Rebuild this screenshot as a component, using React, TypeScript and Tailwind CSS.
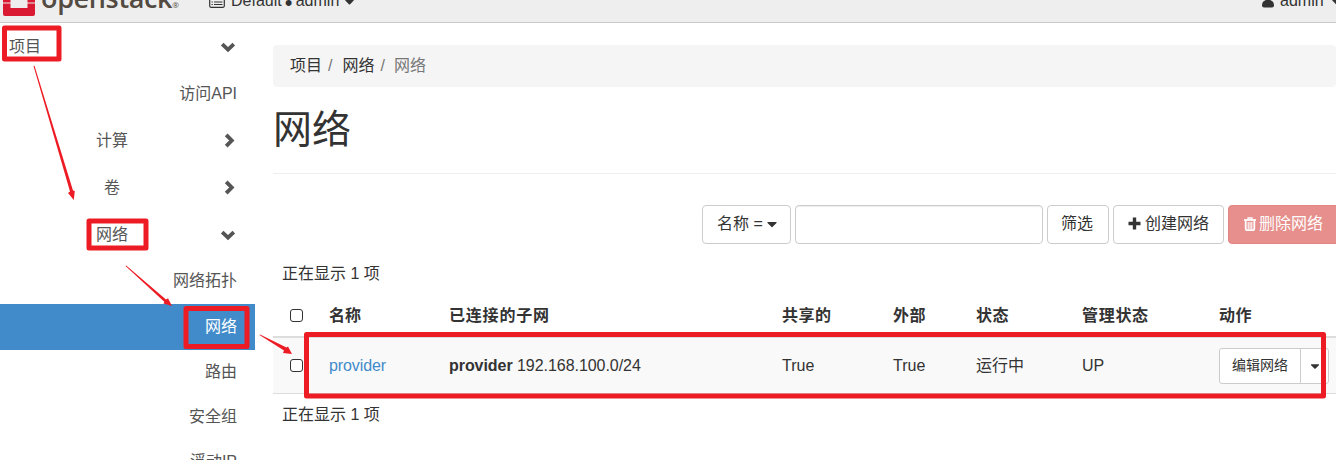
import React from "react";
import { FaCaretDown } from "react-icons/fa";

type NavItem = { label: string; kind: "root" | "group" | "leaf"; open?: boolean; active?: boolean; height: string };

const nav: NavItem[] = [
  { label: "项目", kind: "root", open: true, height: "h-[47px]" },
  { label: "访问API", kind: "leaf", height: "h-[47px]" },
  { label: "计算", kind: "group", height: "h-[47px]" },
  { label: "卷", kind: "group", height: "h-[47px]" },
  { label: "网络", kind: "group", open: true, height: "h-[47px]" },
  { label: "网络拓扑", kind: "leaf", height: "h-[46px]" },
  { label: "网络", kind: "leaf", active: true, height: "h-[46px]" },
  { label: "路由", kind: "leaf", height: "h-[44px]" },
  { label: "安全组", kind: "leaf", height: "h-[45px]" },
  { label: "浮动IP", kind: "leaf", height: "h-[45px]" },
];

function Chevron({ open }: { open?: boolean }) {
  return (
    <svg width="16" height="16" viewBox="0 0 16 16" fill="none" stroke="#555" strokeWidth="3.8" className="shrink-0">
      {open ? <path d="M2.200 5.200 8 10.600l5.800-5.400" /> : <path d="m6.200 1.800 5.600 5.700-5.600 5.700" />}
    </svg>
  );
}

function NavRow({ item }: { item: NavItem }) {
  if (item.kind === "leaf") {
    return (
      <li
        className={`${item.height} flex shrink-0 items-center justify-end pr-[18px] ${
          item.active ? "bg-[#428bca] text-white" : "text-[#555]"
        }`}
      >
        {item.label}
      </li>
    );
  }
  return (
    <li
      className={`${item.height} flex shrink-0 items-center pr-[19px] text-[#555] ${
        item.kind === "root" ? "pl-[9px]" : "pl-[80px]"
      }`}
    >
      <span className={item.kind === "root" ? "" : "w-16 text-center"}>{item.label}</span>
      <span className="ml-auto flex">
        <Chevron open={item.open} />
      </span>
    </li>
  );
}

function Checkbox() {
  return <span className="block size-[13px] rounded-[3px] border border-[#333] bg-white" />;
}

function Plus() {
  return (
    <svg width="13" height="13" viewBox="0 0 13 13" stroke="#333" strokeWidth="3.4" className="mr-1 shrink-0">
      <path d="M6.500 .5v12M.5 6.500h12" />
    </svg>
  );
}

function ListIcon() {
  return (
    <svg width="16" height="14" viewBox="0 0 16 14" fill="none" stroke="#333" className="mr-1.5 shrink-0">
      <rect x=".7" y=".7" width="14.600" height="12.600" rx="1.200" strokeWidth="1.200" />
      <path d="M.7 2.500h14.600" strokeWidth="2" />
      <path d="M2.500 5.500h1.300M5 5.500h8.500M2.500 8h1.300M5 8h8.500M2.500 10.500h1.300M5 10.500h8.500" strokeWidth="1.200" />
    </svg>
  );
}

function UserIcon() {
  return (
    <svg width="12" height="14" viewBox="0 0 12 14" fill="#333" className="mr-1.5 shrink-0">
      <circle cx="6" cy="4" r="3.500" />
      <path d="M3 6.500h6q3 1 3 5 0 2-2 2H2q-2 0-2-2 0-4 3-5Z" />
    </svg>
  );
}

function Trash() {
  return (
    <svg width="12" height="14" viewBox="0 0 12 14" fill="none" stroke="#fff" className="shrink-0">
      <path d="M0 3h12" strokeWidth="1.8" />
      <path d="M4 2.500V1h4v1.500" strokeWidth="1.300" />
      <path d="M1.700 3.500v8.200q0 1.500 1.500 1.500h5.600q1.500 0 1.500-1.500V3.500" strokeWidth="1.800" />
      <path d="M4.200 5v7M6 5v7M7.800 5v7" strokeWidth="1.100" />
    </svg>
  );
}

const columns = "grid grid-cols-[56px_120px_333px_111px_83px_106px_137px_117px] items-center";
const button = "flex h-[39px] shrink-0 items-center rounded border border-[#ccc] bg-white pb-0.5";

function Annotations() {
  return (
    <svg className="pointer-events-none absolute inset-0" width="1336" height="460" viewBox="0 0 1336 460">
      <g fill="none" stroke="#ed1c24" strokeWidth="5" strokeLinejoin="round">
        <rect x="4.500" y="28" width="54.500" height="31" />
        <rect x="89" y="221" width="57" height="27" />
        <rect x="186" y="308.500" width="61" height="38" />
        <rect x="306.500" y="334.500" width="1017" height="61.500" />
      </g>
      <g fill="#ed1c24">
        <path d="M33.500 66 34.500 65.700 73 190.500 74.800 191 73.800 200 68 193 70 191.500Z" />
        <path d="M125.500 266 126.200 265.400 166 299.500 168 298.200 172 306 163.500 303.500 164.300 301.700Z" />
        <path d="M259.500 335 260 334.400 286.500 347.500 288 346.500 292 354 283 353 284 350.500Z" />
      </g>
    </svg>
  );
}

export default function App() {
  return (
    <div className="relative flex h-[460px] w-[1336px] flex-col overflow-hidden bg-white font-['Liberation_Sans','Noto_Sans_CJK_SC',sans-serif] text-base leading-6 text-[#333]">
      <header className="flex h-[23px] shrink-0 items-end overflow-hidden border-b border-[#c8c8c8] bg-[#eee]">
        <svg width="32" height="32" viewBox="0 0 32 32" className="mb-[6px] ml-[3px] shrink-0" fill="#da1a32">
          <path d="M2 0h28q2 0 2 2v7h-8V8H8v1H0V2q0-2 2-2ZM0 10h7.500v8.500H0ZM24.500 10H32v8.500h-7.500ZM0 19.500h7.500V24h17v-4.500H32V30q0 2-2 2H2q-2 0-2-2Z" />
        </svg>
        <span className="mb-[1px] ml-[6px] w-[139px] whitespace-nowrap font-['Open_Sans',sans-serif] text-[27px] leading-8 font-semibold tracking-[-0.35px] text-[#534a42]">
          openstack<span className="text-[8px] font-normal tracking-normal">®</span>
        </span>
        <div className="mb-[9px] ml-[29px] flex h-6 items-center whitespace-nowrap">
          <ListIcon />
          <span>Default</span>
          <span className="h-6 w-[14px] text-center text-[22px] leading-7">•</span>
          <span>admin</span>
          <FaCaretDown size={15} className="ml-[3px]" />
        </div>
        <div className="mb-[9px] ml-auto flex w-[74px] shrink-0 items-center whitespace-nowrap">
          <UserIcon />
          <span>admin</span>
          <FaCaretDown size={15} className="ml-[5px] shrink-0" />
        </div>
      </header>

      <div className="flex min-h-0 flex-1">
        <nav className="w-[255px] shrink-0">
          <ul className="flex flex-col">
            {nav.map((item, i) => (
              <NavRow key={i} item={item} />
            ))}
          </ul>
        </nav>

        <main className="ml-[18px] flex w-[1063px] shrink-0 flex-col pt-[22px]">
          <div className="flex h-[42px] shrink-0 items-center rounded bg-[#f5f5f5] pl-[17px]">
            <span>项目</span>
            <span className="mx-1.5 text-[#777]">/</span>
            <span className="ml-1">网络</span>
            <span className="mx-1.5 text-[#777]">/</span>
            <span className="ml-[3px] text-[#777]">网络</span>
          </div>
          <h1 className="flex h-[87px] shrink-0 items-start border-b border-[#eee] pt-[19px] text-[39px] leading-[48px]">网络</h1>

          <div className="mt-[31px] flex shrink-0 gap-1 pl-[429px]">
            <button className={`${button} w-[89px] pl-[14px]`}>
              名称 =<FaCaretDown size={16} className="ml-px" />
            </button>
            <input className="h-[39px] w-[248px] shrink-0 rounded border border-[#ccc] shadow-[inset_0_1px_1px_rgba(0,0,0,0.075)]" />
            <button className={`${button} w-[62px] pl-[13px]`}>筛选</button>
            <button className={`${button} w-[111px] pl-[14px]`}>
              <Plus />
              创建网络
            </button>
            <button className="flex h-[39px] w-[112px] shrink-0 items-center rounded border border-[#e38582] bg-[#e68f8c] pb-0.5 pl-[15px] text-white">
              <Trash />
              <span className="ml-[3px]">删除网络</span>
            </button>
          </div>

          <p className="mt-[18px] h-6 shrink-0 pl-[9px]">正在显示 1 项</p>

          <div className={`${columns} h-[52px] shrink-0 border-b-2 border-[#ddd] pt-[9px] font-bold`}>
            <span className="pl-[17px]"><Checkbox /></span>
            <span>名称</span>
            <span className="tracking-[0.8px]">已连接的子网</span>
            <span className="tracking-[0.5px]">共享的</span>
            <span className="tracking-[0.5px]">外部</span>
            <span className="tracking-[0.5px]">状态</span>
            <span className="tracking-[0.7px]">管理状态</span>
            <span className="tracking-[0.5px]">动作</span>
          </div>
          <div className={`${columns} h-14 shrink-0 border-b border-[#ddd] bg-[#f9f9f9]`}>
            <span className="pl-[17px]"><Checkbox /></span>
            <a className="tracking-[-0.1px] text-[#428bca]">provider</a>
            <span className="tracking-[-0.05px]"><b>provider</b> 192.168.100.0/24</span>
            <span>True</span>
            <span>True</span>
            <span>运行中</span>
            <span>UP</span>
            <div className="flex h-9 w-[110px] rounded-[3px] border border-[#ccc] bg-white text-sm">
              <button className="w-[81px] border-r border-[#ccc] pb-0.5">编辑网络</button>
              <button className="flex flex-1 items-center justify-center"><FaCaretDown size={14} /></button>
            </div>
          </div>
          <p className="mt-[9px] h-6 shrink-0 pl-[9px]">正在显示 1 项</p>
        </main>
      </div>
      <Annotations />
    </div>
  );
}
